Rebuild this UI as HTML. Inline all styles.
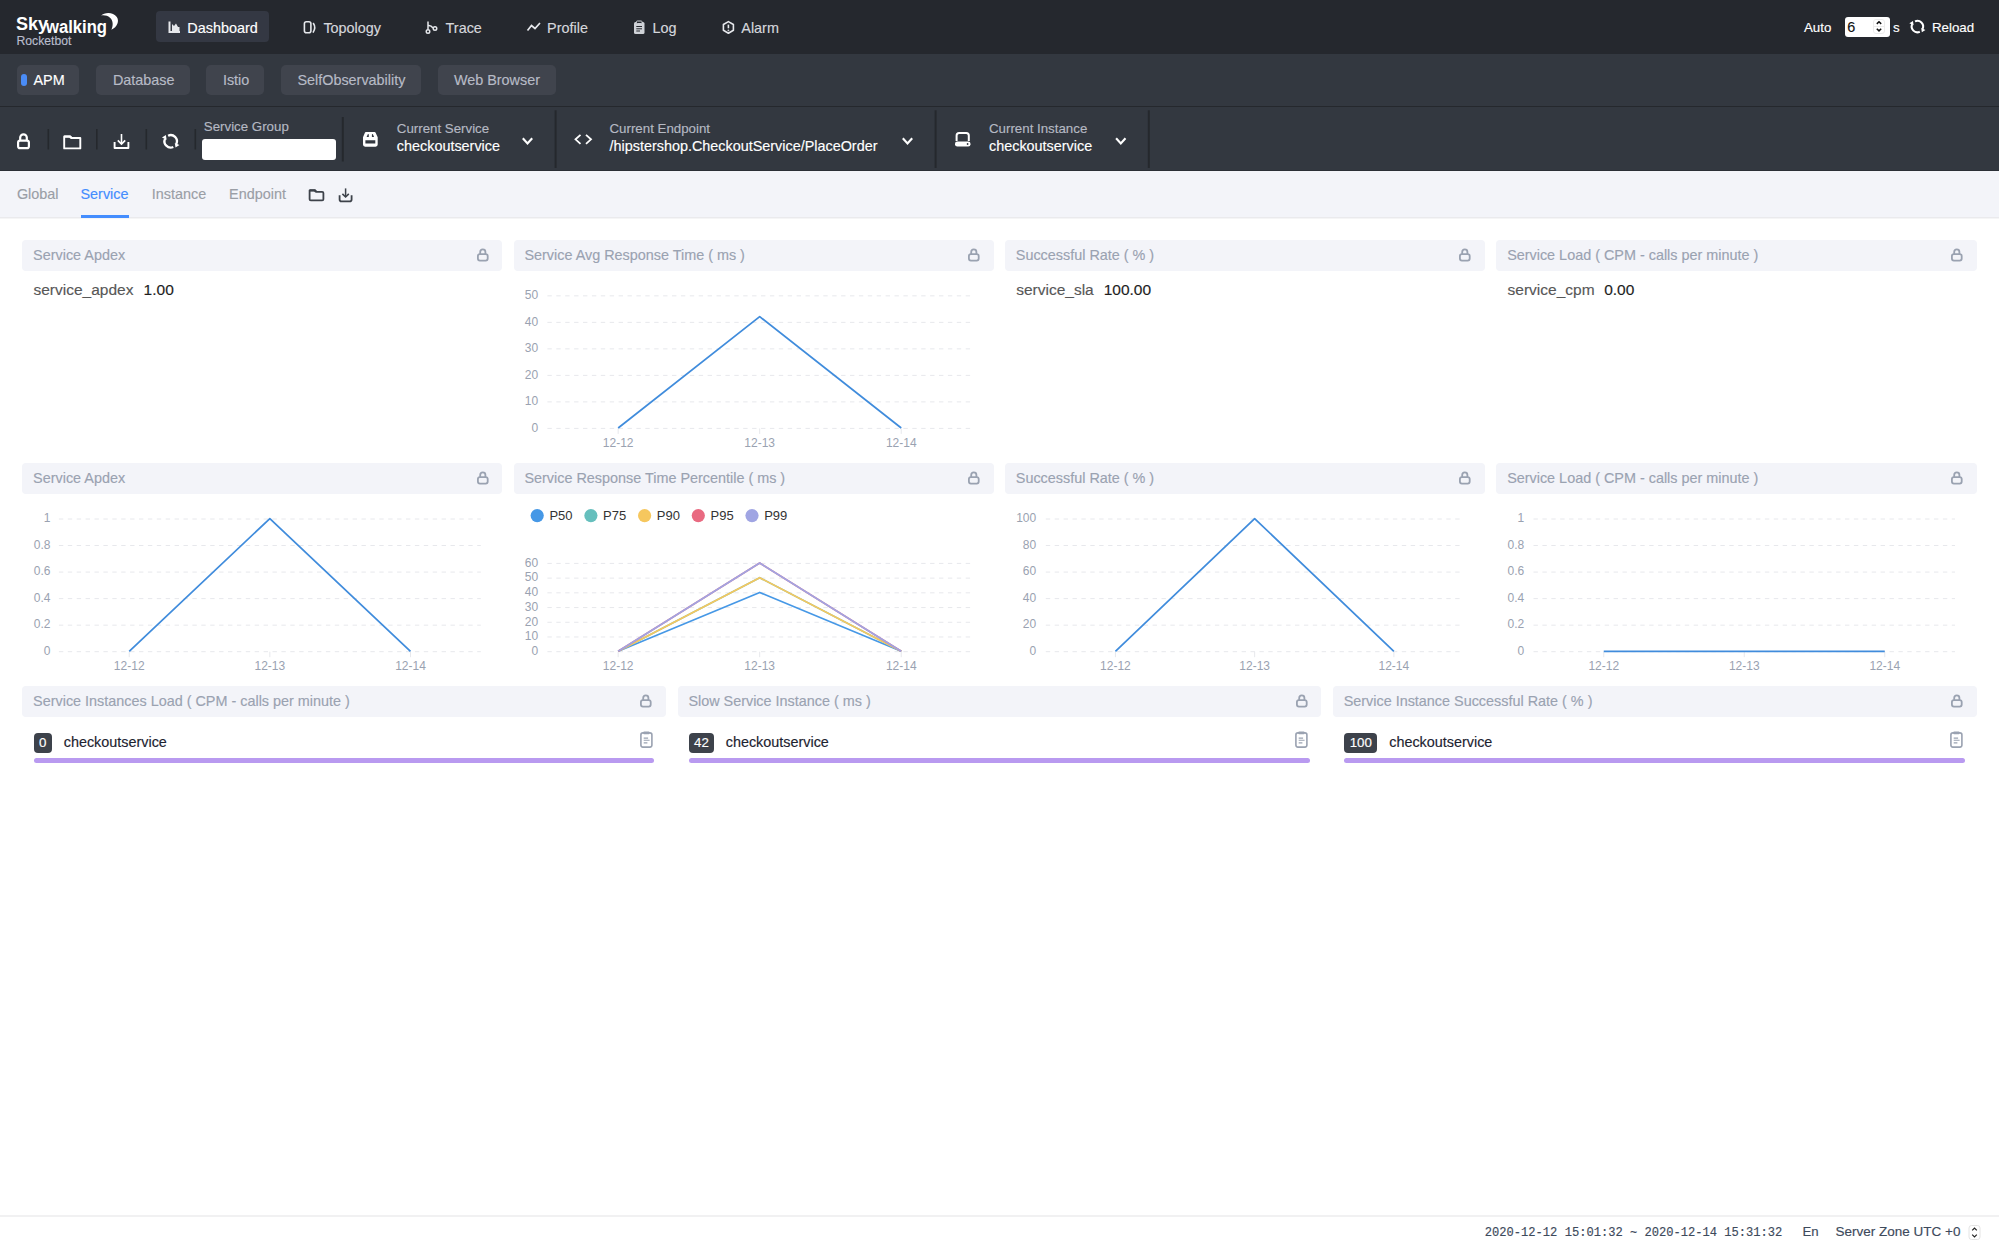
<!DOCTYPE html>
<html><head><meta charset="utf-8">
<style>
html,body{margin:0;padding:0;width:1999px;height:1249px;overflow:hidden;background:#fff;font-family:"Liberation Sans",sans-serif;}
.a{position:absolute;}
.t{position:absolute;white-space:nowrap;line-height:1;-webkit-text-stroke:0.15px currentColor;}
#hdr{left:0;top:0;width:1999px;height:54px;background:#25282e;}
#grp{left:0;top:54px;width:1999px;height:52px;background:#333840;}
#bline{left:0;top:106px;width:1999px;height:1px;background:#25282d;}
#tool{left:0;top:107px;width:1999px;height:64px;background:#333840;}
#tabs{left:0;top:171px;width:1999px;height:46px;background:#f3f4f9;border-bottom:1px solid #eaeaed;box-shadow:0 1px 0 #f5f5f6;}
#foot{left:0;top:1215px;width:1999px;height:2px;background:#f1f1f2;}
.navbtn{background:#343843;border-radius:4px;}
.gbtn{background:#40444d;border-radius:5px;height:29.5px;top:65px;}
.sep{background:#25282d;width:2px;}
.ch{background:#f3f4f9;border-radius:4px;height:31px;}
.cht{font-size:14.4px;color:#9aa2b1;}
</style></head><body>
<!-- header -->
<div id="hdr" class="a"></div>
<div id="grp" class="a"></div>
<div id="bline" class="a"></div>
<div id="tool" class="a"></div>
<div id="tabs" class="a"></div>
<div class="a" style="left:0;top:170px;width:1999px;height:1px;background:#2b2f36"></div>
<div id="foot" class="a"></div>

<!-- logo -->
<svg class="a" style="left:0;top:0" width="140" height="54" viewBox="0 0 140 54">
  <text x="16" y="30.2" font-family="Liberation Sans" font-weight="bold" font-size="18" fill="#fff">Sky</text>
  <text x="46" y="32.9" font-family="Liberation Sans" font-weight="bold" font-size="17.5" fill="#fff" textLength="61" lengthAdjust="spacingAndGlyphs">walking</text>
  <path d="M101.2 15.5 C104 12.5 113 11.5 116.8 17 C119.5 21 117.5 27 111.4 29.8 C113.5 25 113 20.5 110 17.8 C107.5 15.7 104.5 15 101.2 15.5 Z" fill="#fff"/>
</svg>
<div class="t" style="left:16.5px;top:34.9px;font-size:12.2px;color:#b9bdcc">Rocketbot</div>

<!-- nav -->
<div class="a navbtn" style="left:156px;top:11px;width:113px;height:31px"></div>
<svg class="a" style="left:0;top:0" width="800" height="54" viewBox="0 0 800 54" fill="none" stroke="#e6e8ec">
  <!-- dashboard icon -->
  <path d="M169.5 21.5 V32 H180" stroke-width="2"/>
  <path d="M172 31 V24 L174 26 L176 23.5 L178 27 L179.5 27 V31 Z" fill="#e6e8ec" stroke="none"/>
  <!-- topology -->
  <rect x="304.4" y="21.8" width="6.5" height="11" rx="2" stroke-width="1.6"/>
  <path d="M313.2 23 Q316.3 27.5 313 32.6" stroke-width="1.6"/>
  <!-- trace -->
  <circle cx="428" cy="31.5" r="1.8" stroke-width="1.4"/>
  <path d="M428 21.5 V29.6 M428 25.5 Q431 25 433 28" stroke-width="1.5"/>
  <circle cx="435" cy="28.5" r="1.8" stroke-width="1.4"/>
  <!-- profile -->
  <path d="M527.5 30.5 L531.5 25.5 L535 28.5 L540 23" stroke-width="1.7"/>
  <!-- log -->
  <rect x="634" y="22" width="10.5" height="12" rx="1.5" fill="#cfd2d7" stroke="none"/>
  <rect x="636.5" y="21" width="5.5" height="2.5" rx="0.8" fill="#25282e" stroke="#cfd2d7" stroke-width="1"/>
  <path d="M636.3 26.5 H642 M636.3 28.8 H642 M636.3 31 H640" stroke="#25282e" stroke-width="1"/>
  <!-- alarm -->
  <path d="M728.4 21.6 L733.4 24.5 V30.3 L728.4 33.2 L723.4 30.3 V24.5 Z" stroke-width="1.6" stroke-linejoin="round"/>
  <path d="M728.4 24.6 V28.3" stroke-width="1.6"/>
  <circle cx="728.4" cy="30.4" r="0.9" fill="#cfd2d7" stroke="none"/>
</svg>
<div class="t" style="left:187.3px;top:20.7px;font-size:14.4px;color:#fff">Dashboard</div>
<div class="t" style="left:323.4px;top:20.7px;font-size:14.4px;color:#d5d7dc">Topology</div>
<div class="t" style="left:445.6px;top:20.7px;font-size:14.4px;color:#d5d7dc">Trace</div>
<div class="t" style="left:547.1px;top:20.7px;font-size:14.4px;color:#d5d7dc">Profile</div>
<div class="t" style="left:652.6px;top:20.7px;font-size:14.4px;color:#d5d7dc">Log</div>
<div class="t" style="left:741.3px;top:20.7px;font-size:14.4px;color:#d5d7dc">Alarm</div>

<!-- right header -->
<div class="t" style="left:1804px;top:20.6px;font-size:13.3px;color:#fff">Auto</div>
<div class="a" style="left:1845px;top:17px;width:44.5px;height:19.5px;background:#fff;border-radius:3px"></div>
<div class="t" style="left:1847.2px;top:19.6px;font-size:14.4px;color:#111">6</div>
<svg class="a" style="left:1873px;top:19px" width="12" height="15" viewBox="0 0 12 15" fill="none" stroke="#111" stroke-width="1.5">
  <rect x="0.5" y="0.5" width="11" height="14" rx="2.5" stroke="#ececec" stroke-width="1"/><path d="M0.5 7.5 H11.5" stroke="#ececec" stroke-width="1"/>
  <path d="M3.8 4.9 L6 2.8 L8.2 4.9 M3.8 9.8 L6 11.9 L8.2 9.8"/>
</svg>
<div class="t" style="left:1893px;top:20.6px;font-size:13.3px;color:#fff">s</div>
<svg class="a" style="left:0;top:0" width="1999" height="54" viewBox="0 0 1999 54" fill="none" stroke="#fff"><g transform="translate(1917.4 26.6) scale(0.92) translate(-170.7 -141.3)">
  <path d="M168.08 135.68 A6.2 6.2 0 0 1 176.32 143.92" stroke-width="2.2"/><path d="M179.44 145.04 L174.80 142.88 L175.52 147.52 Z" fill="#fff" stroke="none"/>
  <path d="M173.32 146.92 A6.2 6.2 0 0 1 165.08 138.68" stroke-width="2.2"/><path d="M161.96 137.56 L166.60 139.72 L165.88 135.08 Z" fill="#fff" stroke="none"/></g></svg>
<div class="t" style="left:1932px;top:20.6px;font-size:13.3px;color:#fff">Reload</div>

<!-- group buttons -->
<div class="a gbtn" style="left:17px;width:62px"></div>
<div class="a" style="left:21px;top:74px;width:6px;height:12px;background:#4a8cf7;border-radius:3px"></div>
<div class="t" style="left:33.5px;top:72.8px;font-size:14.4px;color:#fff">APM</div>
<div class="a gbtn" style="left:96px;width:93.5px"></div>
<div class="t" style="left:112.9px;top:72.8px;font-size:14.4px;color:#b7bbc6">Database</div>
<div class="a gbtn" style="left:206px;width:57.5px"></div>
<div class="t" style="left:222.9px;top:72.8px;font-size:14.4px;color:#b7bbc6">Istio</div>
<div class="a gbtn" style="left:281px;width:139.5px"></div>
<div class="t" style="left:297.4px;top:72.8px;font-size:14.4px;color:#b7bbc6">SelfObservability</div>
<div class="a gbtn" style="left:437.5px;width:118px"></div>
<div class="t" style="left:453.9px;top:72.8px;font-size:14.4px;color:#b7bbc6">Web Browser</div>


<!-- toolbar -->
<svg class="a" style="left:0;top:107px" width="1200" height="64" viewBox="0 107 1200 64" fill="none" stroke="#fff">
  <!-- lock -->
  <path d="M20.2 140.5 V137.6 A3.3 3.3 0 0 1 26.8 137.6 V140.5" stroke-width="2.2"/>
  <rect x="18.1" y="140.6" width="10.8" height="7.6" rx="2" stroke-width="2.2"/>
  <!-- separators -->
  <rect x="47.5" y="129" width="1.6" height="20.5" fill="#25282d" stroke="none"/>
  <rect x="96" y="129" width="1.6" height="20.5" fill="#25282d" stroke="none"/>
  <rect x="145.5" y="129" width="1.6" height="20.5" fill="#25282d" stroke="none"/>
  <rect x="194.5" y="129" width="1.6" height="20.5" fill="#25282d" stroke="none"/>
  <rect x="341.8" y="117" width="2" height="44.5" fill="#25282d" stroke="none"/>
  <rect x="554.6" y="110.3" width="2" height="57.7" fill="#25282d" stroke="none"/>
  <rect x="934.6" y="110.3" width="2" height="57.7" fill="#25282d" stroke="none"/>
  <rect x="1147.8" y="110.3" width="2" height="57.7" fill="#25282d" stroke="none"/>
  <!-- folder -->
  <path d="M64.2 148.4 V136.4 H70 L71.5 138 H80.3 V148.4 Z" stroke-width="1.9" stroke-linejoin="round"/>
  <path d="M64.2 136.6 H70 L71.3 137.9" stroke-width="2.4"/>
  <!-- download -->
  <path d="M121.5 134 V144" stroke-width="1.6"/>
  <path d="M117.8 140.3 L121.5 144 L125.2 140.3" stroke-width="1.7"/>
  <path d="M114.6 142 V148 H128.4 V142" stroke-width="1.9" stroke-linejoin="round"/>
  <!-- refresh -->
  <path d="M168.08 135.68 A6.2 6.2 0 0 1 176.32 143.92" stroke-width="2.3"/><path d="M179.44 145.04 L174.80 142.88 L175.52 147.52 Z" fill="#fff" stroke="none"/>
  <path d="M173.32 146.92 A6.2 6.2 0 0 1 165.08 138.68" stroke-width="2.3"/><path d="M161.96 137.56 L166.60 139.72 L165.88 135.08 Z" fill="#fff" stroke="none"/>
  <!-- service icon -->
  <path fill="#fff" stroke="none" fill-rule="evenodd" d="M365.8 132 H374.6 Q375.2 132 375.5 132.6 L377.7 137.3 V144.6 Q377.7 146.7 375.6 146.7 H365.1 Q363 146.7 363 144.6 V137.3 L365 132.6 Q365.3 132 365.8 132 Z M365.4 140.2 H375.3 V143.6 H365.4 Z M366.6 137 L367.8 134.3 Q368.4 133.9 368.8 134.4 L368.8 137 Z M371.9 137 L371.9 134.4 Q372.3 133.9 372.9 134.3 L374.1 137 Z"/>
  <!-- chevrons -->
  <path d="M522.8 138.2 L527.5 143.5 L532.2 138.2" stroke-width="2.1"/>
  <path d="M902.8 138.2 L907.5 143.5 L912.2 138.2" stroke-width="2.1"/>
  <path d="M1116.1 138.2 L1120.8 143.5 L1125.5 138.2" stroke-width="2.1"/>
  <!-- endpoint icon -->
  <path d="M580.5 134.8 L575.5 139.3 L580.5 143.8 M586 134.8 L591 139.3 L586 143.8" stroke-width="1.8"/>
  <!-- instance icon -->
  <path d="M956.6 141 V135.5 A2.5 2.5 0 0 1 959.1 133 H966.3 A2.5 2.5 0 0 1 968.8 135.5 V141" stroke-width="2"/>
  <rect x="955" y="141.5" width="15.5" height="5" rx="2.3" fill="#fff" stroke="none"/>
  <circle cx="967.6" cy="144" r="0.9" fill="#333840" stroke="none"/>
</svg>
<div class="a" style="left:201.7px;top:138.8px;width:134.2px;height:21.3px;background:#fff;border-radius:3px"></div>
<div class="t" style="left:203.8px;top:119.9px;font-size:13.3px;color:#b5b9c3">Service Group</div>
<div class="t" style="left:396.8px;top:122.0px;font-size:13.3px;color:#b5b9c3">Current Service</div>
<div class="t" style="left:396.8px;top:139.0px;font-size:14.4px;color:#fff">checkoutservice</div>
<div class="t" style="left:609.5px;top:122.0px;font-size:13.3px;color:#b5b9c3">Current Endpoint</div>
<div class="t" style="left:609.5px;top:139.0px;font-size:14.4px;color:#fff">/hipstershop.CheckoutService/PlaceOrder</div>
<div class="t" style="left:989px;top:122.0px;font-size:13.3px;color:#b5b9c3">Current Instance</div>
<div class="t" style="left:989px;top:139.0px;font-size:14.4px;color:#fff">checkoutservice</div>

<!-- tabs -->
<div class="t" style="left:16.9px;top:187.1px;font-size:14.4px;color:#9a9ea6">Global</div>
<div class="t" style="left:80.5px;top:187.1px;font-size:14.4px;color:#448dfe">Service</div>
<div class="a" style="left:80.9px;top:214.5px;width:48.5px;height:3px;background:#448dfe"></div>
<div class="t" style="left:151.8px;top:187.1px;font-size:14.4px;color:#9a9ea6">Instance</div>
<div class="t" style="left:229.1px;top:187.1px;font-size:14.4px;color:#9a9ea6">Endpoint</div>
<svg class="a" style="left:300px;top:180px" width="60" height="30" viewBox="300 180 60 30" fill="none" stroke="#3d424a">
  <path d="M309.6 199.2 V190.3 H314.8 L316.2 191.8 H322.2 Q323.4 191.8 323.4 193 V199.2 Q323.4 200.4 322.2 200.4 H310.8 Q309.6 200.4 309.6 199.2 Z" stroke-width="1.8" stroke-linejoin="round"/>
  <path d="M309.6 190.4 H314.8 L316 191.6" stroke-width="2.3"/>
  <path d="M345.6 188.4 V197" stroke-width="1.5"/>
  <path d="M342.4 193.9 L345.6 197 L348.8 193.9" stroke-width="1.6"/>
  <path d="M339.6 195.2 V199.4 Q339.6 201.3 341.5 201.3 H349.7 Q351.6 201.3 351.6 199.4 V195.2" stroke-width="1.8"/>
</svg>

<div class="a ch" style="left:22.20px;top:240px;width:480.25px"></div>
<div class="t" style="left:33.10px;top:247.91px;font-size:14.4px;color:#9aa2b1;">Service Apdex</div>
<svg class="a" style="left:476.55px;top:248.20px" width="13" height="15" viewBox="0 0 13 15" fill="none" stroke="#9aa2b1" stroke-width="1.8"><path d="M3.2 6.2 V4.0 A2.6 2.6 0 0 1 8.4 4.0 V6.2"/><rect x="0.9" y="6.1" width="9.8" height="6.5" rx="2"/></svg>
<div class="a ch" style="left:513.55px;top:240px;width:480.25px"></div>
<div class="t" style="left:524.45px;top:247.91px;font-size:14.4px;color:#9aa2b1;">Service Avg Response Time ( ms )</div>
<svg class="a" style="left:967.90px;top:248.20px" width="13" height="15" viewBox="0 0 13 15" fill="none" stroke="#9aa2b1" stroke-width="1.8"><path d="M3.2 6.2 V4.0 A2.6 2.6 0 0 1 8.4 4.0 V6.2"/><rect x="0.9" y="6.1" width="9.8" height="6.5" rx="2"/></svg>
<div class="a ch" style="left:1004.90px;top:240px;width:480.25px"></div>
<div class="t" style="left:1015.80px;top:247.91px;font-size:14.4px;color:#9aa2b1;">Successful Rate ( % )</div>
<svg class="a" style="left:1459.25px;top:248.20px" width="13" height="15" viewBox="0 0 13 15" fill="none" stroke="#9aa2b1" stroke-width="1.8"><path d="M3.2 6.2 V4.0 A2.6 2.6 0 0 1 8.4 4.0 V6.2"/><rect x="0.9" y="6.1" width="9.8" height="6.5" rx="2"/></svg>
<div class="a ch" style="left:1496.25px;top:240px;width:480.25px"></div>
<div class="t" style="left:1507.15px;top:247.91px;font-size:14.4px;color:#9aa2b1;">Service Load ( CPM - calls per minute )</div>
<svg class="a" style="left:1950.60px;top:248.20px" width="13" height="15" viewBox="0 0 13 15" fill="none" stroke="#9aa2b1" stroke-width="1.8"><path d="M3.2 6.2 V4.0 A2.6 2.6 0 0 1 8.4 4.0 V6.2"/><rect x="0.9" y="6.1" width="9.8" height="6.5" rx="2"/></svg>
<div class="a ch" style="left:22.20px;top:463px;width:480.25px"></div>
<div class="t" style="left:33.10px;top:470.91px;font-size:14.4px;color:#9aa2b1;">Service Apdex</div>
<svg class="a" style="left:476.55px;top:471.20px" width="13" height="15" viewBox="0 0 13 15" fill="none" stroke="#9aa2b1" stroke-width="1.8"><path d="M3.2 6.2 V4.0 A2.6 2.6 0 0 1 8.4 4.0 V6.2"/><rect x="0.9" y="6.1" width="9.8" height="6.5" rx="2"/></svg>
<div class="a ch" style="left:513.55px;top:463px;width:480.25px"></div>
<div class="t" style="left:524.45px;top:470.91px;font-size:14.4px;color:#9aa2b1;">Service Response Time Percentile ( ms )</div>
<svg class="a" style="left:967.90px;top:471.20px" width="13" height="15" viewBox="0 0 13 15" fill="none" stroke="#9aa2b1" stroke-width="1.8"><path d="M3.2 6.2 V4.0 A2.6 2.6 0 0 1 8.4 4.0 V6.2"/><rect x="0.9" y="6.1" width="9.8" height="6.5" rx="2"/></svg>
<div class="a ch" style="left:1004.90px;top:463px;width:480.25px"></div>
<div class="t" style="left:1015.80px;top:470.91px;font-size:14.4px;color:#9aa2b1;">Successful Rate ( % )</div>
<svg class="a" style="left:1459.25px;top:471.20px" width="13" height="15" viewBox="0 0 13 15" fill="none" stroke="#9aa2b1" stroke-width="1.8"><path d="M3.2 6.2 V4.0 A2.6 2.6 0 0 1 8.4 4.0 V6.2"/><rect x="0.9" y="6.1" width="9.8" height="6.5" rx="2"/></svg>
<div class="a ch" style="left:1496.25px;top:463px;width:480.25px"></div>
<div class="t" style="left:1507.15px;top:470.91px;font-size:14.4px;color:#9aa2b1;">Service Load ( CPM - calls per minute )</div>
<svg class="a" style="left:1950.60px;top:471.20px" width="13" height="15" viewBox="0 0 13 15" fill="none" stroke="#9aa2b1" stroke-width="1.8"><path d="M3.2 6.2 V4.0 A2.6 2.6 0 0 1 8.4 4.0 V6.2"/><rect x="0.9" y="6.1" width="9.8" height="6.5" rx="2"/></svg>
<div class="a ch" style="left:22.20px;top:686px;width:643.90px"></div>
<div class="t" style="left:33.10px;top:693.91px;font-size:14.4px;color:#9aa2b1;">Service Instances Load ( CPM - calls per minute )</div>
<svg class="a" style="left:640.20px;top:694.20px" width="13" height="15" viewBox="0 0 13 15" fill="none" stroke="#9aa2b1" stroke-width="1.8"><path d="M3.2 6.2 V4.0 A2.6 2.6 0 0 1 8.4 4.0 V6.2"/><rect x="0.9" y="6.1" width="9.8" height="6.5" rx="2"/></svg>
<div class="a ch" style="left:677.50px;top:686px;width:643.90px"></div>
<div class="t" style="left:688.40px;top:693.91px;font-size:14.4px;color:#9aa2b1;">Slow Service Instance ( ms )</div>
<svg class="a" style="left:1295.50px;top:694.20px" width="13" height="15" viewBox="0 0 13 15" fill="none" stroke="#9aa2b1" stroke-width="1.8"><path d="M3.2 6.2 V4.0 A2.6 2.6 0 0 1 8.4 4.0 V6.2"/><rect x="0.9" y="6.1" width="9.8" height="6.5" rx="2"/></svg>
<div class="a ch" style="left:1332.80px;top:686px;width:643.90px"></div>
<div class="t" style="left:1343.70px;top:693.91px;font-size:14.4px;color:#9aa2b1;">Service Instance Successful Rate ( % )</div>
<svg class="a" style="left:1950.80px;top:694.20px" width="13" height="15" viewBox="0 0 13 15" fill="none" stroke="#9aa2b1" stroke-width="1.8"><path d="M3.2 6.2 V4.0 A2.6 2.6 0 0 1 8.4 4.0 V6.2"/><rect x="0.9" y="6.1" width="9.8" height="6.5" rx="2"/></svg>
<div class="t" style="left:33.50px;top:282.38px;font-size:15.5px;color:#575757;">service_apdex</div>
<div class="t" style="left:143.60px;top:282.38px;font-size:15.5px;color:#1e1e1e;">1.00</div>
<div class="t" style="left:1016.20px;top:282.38px;font-size:15.5px;color:#575757;">service_sla</div>
<div class="t" style="left:1103.70px;top:282.38px;font-size:15.5px;color:#1e1e1e;">100.00</div>
<div class="t" style="left:1507.55px;top:282.38px;font-size:15.5px;color:#575757;">service_cpm</div>
<div class="t" style="left:1604.20px;top:282.38px;font-size:15.5px;color:#1e1e1e;">0.00</div>
<svg class="a" style="left:0;top:0" width="1999" height="1249" viewBox="0 0 1999 1249" font-family="Liberation Sans"><line x1="547.40" y1="295.85" x2="972.00" y2="295.85" stroke="#e7e8ec" stroke-width="1" stroke-dasharray="4.4 4.5"/><text x="538.20" y="299.15" text-anchor="end" font-size="12" fill="#9aa2b1">50</text><line x1="547.40" y1="322.36" x2="972.00" y2="322.36" stroke="#e7e8ec" stroke-width="1" stroke-dasharray="4.4 4.5"/><text x="538.20" y="325.66" text-anchor="end" font-size="12" fill="#9aa2b1">40</text><line x1="547.40" y1="348.87" x2="972.00" y2="348.87" stroke="#e7e8ec" stroke-width="1" stroke-dasharray="4.4 4.5"/><text x="538.20" y="352.17" text-anchor="end" font-size="12" fill="#9aa2b1">30</text><line x1="547.40" y1="375.38" x2="972.00" y2="375.38" stroke="#e7e8ec" stroke-width="1" stroke-dasharray="4.4 4.5"/><text x="538.20" y="378.68" text-anchor="end" font-size="12" fill="#9aa2b1">20</text><line x1="547.40" y1="401.89" x2="972.00" y2="401.89" stroke="#e7e8ec" stroke-width="1" stroke-dasharray="4.4 4.5"/><text x="538.20" y="405.19" text-anchor="end" font-size="12" fill="#9aa2b1">10</text><line x1="547.40" y1="428.40" x2="972.00" y2="428.40" stroke="#e7e8ec" stroke-width="1" stroke-dasharray="4.4 4.5"/><text x="538.20" y="431.70" text-anchor="end" font-size="12" fill="#9aa2b1">0</text><line x1="618.17" y1="428.40" x2="618.17" y2="433.90" stroke="#e7e8ec" stroke-width="1"/><text x="618.17" y="446.80" text-anchor="middle" font-size="12" fill="#9aa2b1">12-12</text><line x1="759.70" y1="428.40" x2="759.70" y2="433.90" stroke="#e7e8ec" stroke-width="1"/><text x="759.70" y="446.80" text-anchor="middle" font-size="12" fill="#9aa2b1">12-13</text><line x1="901.23" y1="428.40" x2="901.23" y2="433.90" stroke="#e7e8ec" stroke-width="1"/><text x="901.23" y="446.80" text-anchor="middle" font-size="12" fill="#9aa2b1">12-14</text><polyline points="618.17,428.00 759.70,316.66 901.23,428.00" fill="none" stroke="#408cdc" stroke-width="1.75" stroke-linejoin="round"/><line x1="58.90" y1="519.00" x2="480.80" y2="519.00" stroke="#e7e8ec" stroke-width="1" stroke-dasharray="4.4 4.5"/><text x="50.40" y="522.30" text-anchor="end" font-size="12" fill="#9aa2b1">1</text><line x1="58.90" y1="545.54" x2="480.80" y2="545.54" stroke="#e7e8ec" stroke-width="1" stroke-dasharray="4.4 4.5"/><text x="50.40" y="548.84" text-anchor="end" font-size="12" fill="#9aa2b1">0.8</text><line x1="58.90" y1="572.08" x2="480.80" y2="572.08" stroke="#e7e8ec" stroke-width="1" stroke-dasharray="4.4 4.5"/><text x="50.40" y="575.38" text-anchor="end" font-size="12" fill="#9aa2b1">0.6</text><line x1="58.90" y1="598.62" x2="480.80" y2="598.62" stroke="#e7e8ec" stroke-width="1" stroke-dasharray="4.4 4.5"/><text x="50.40" y="601.92" text-anchor="end" font-size="12" fill="#9aa2b1">0.4</text><line x1="58.90" y1="625.16" x2="480.80" y2="625.16" stroke="#e7e8ec" stroke-width="1" stroke-dasharray="4.4 4.5"/><text x="50.40" y="628.46" text-anchor="end" font-size="12" fill="#9aa2b1">0.2</text><line x1="58.90" y1="651.70" x2="480.80" y2="651.70" stroke="#e7e8ec" stroke-width="1" stroke-dasharray="4.4 4.5"/><text x="50.40" y="655.00" text-anchor="end" font-size="12" fill="#9aa2b1">0</text><line x1="129.22" y1="651.70" x2="129.22" y2="657.20" stroke="#e7e8ec" stroke-width="1"/><text x="129.22" y="670.10" text-anchor="middle" font-size="12" fill="#9aa2b1">12-12</text><line x1="269.85" y1="651.70" x2="269.85" y2="657.20" stroke="#e7e8ec" stroke-width="1"/><text x="269.85" y="670.10" text-anchor="middle" font-size="12" fill="#9aa2b1">12-13</text><line x1="410.48" y1="651.70" x2="410.48" y2="657.20" stroke="#e7e8ec" stroke-width="1"/><text x="410.48" y="670.10" text-anchor="middle" font-size="12" fill="#9aa2b1">12-14</text><polyline points="129.22,651.30 269.85,518.60 410.48,651.30" fill="none" stroke="#408cdc" stroke-width="1.75" stroke-linejoin="round"/><line x1="547.40" y1="563.40" x2="972.00" y2="563.40" stroke="#e7e8ec" stroke-width="1" stroke-dasharray="4.4 4.5"/><text x="538.20" y="566.70" text-anchor="end" font-size="12" fill="#9aa2b1">60</text><line x1="547.40" y1="578.12" x2="972.00" y2="578.12" stroke="#e7e8ec" stroke-width="1" stroke-dasharray="4.4 4.5"/><text x="538.20" y="581.42" text-anchor="end" font-size="12" fill="#9aa2b1">50</text><line x1="547.40" y1="592.83" x2="972.00" y2="592.83" stroke="#e7e8ec" stroke-width="1" stroke-dasharray="4.4 4.5"/><text x="538.20" y="596.13" text-anchor="end" font-size="12" fill="#9aa2b1">40</text><line x1="547.40" y1="607.55" x2="972.00" y2="607.55" stroke="#e7e8ec" stroke-width="1" stroke-dasharray="4.4 4.5"/><text x="538.20" y="610.85" text-anchor="end" font-size="12" fill="#9aa2b1">30</text><line x1="547.40" y1="622.27" x2="972.00" y2="622.27" stroke="#e7e8ec" stroke-width="1" stroke-dasharray="4.4 4.5"/><text x="538.20" y="625.57" text-anchor="end" font-size="12" fill="#9aa2b1">20</text><line x1="547.40" y1="636.98" x2="972.00" y2="636.98" stroke="#e7e8ec" stroke-width="1" stroke-dasharray="4.4 4.5"/><text x="538.20" y="640.28" text-anchor="end" font-size="12" fill="#9aa2b1">10</text><line x1="547.40" y1="651.70" x2="972.00" y2="651.70" stroke="#e7e8ec" stroke-width="1" stroke-dasharray="4.4 4.5"/><text x="538.20" y="655.00" text-anchor="end" font-size="12" fill="#9aa2b1">0</text><line x1="618.17" y1="651.70" x2="618.17" y2="657.20" stroke="#e7e8ec" stroke-width="1"/><text x="618.17" y="670.10" text-anchor="middle" font-size="12" fill="#9aa2b1">12-12</text><line x1="759.70" y1="651.70" x2="759.70" y2="657.20" stroke="#e7e8ec" stroke-width="1"/><text x="759.70" y="670.10" text-anchor="middle" font-size="12" fill="#9aa2b1">12-13</text><line x1="901.23" y1="651.70" x2="901.23" y2="657.20" stroke="#e7e8ec" stroke-width="1"/><text x="901.23" y="670.10" text-anchor="middle" font-size="12" fill="#9aa2b1">12-14</text><polyline points="618.17,651.30 759.70,592.43 901.23,651.30" fill="none" stroke="#4698e6" stroke-width="1.7" stroke-linejoin="round"/><polyline points="618.17,651.30 759.70,577.72 901.23,651.30" fill="none" stroke="#66bfbd" stroke-width="1.7" stroke-linejoin="round"/><polyline points="618.17,651.30 759.70,577.72 901.23,651.30" fill="none" stroke="#f6c75e" stroke-width="1.7" stroke-linejoin="round"/><polyline points="618.17,651.30 759.70,563.00 901.23,651.30" fill="none" stroke="#e96a81" stroke-width="1.7" stroke-linejoin="round"/><polyline points="618.17,651.30 759.70,563.00 901.23,651.30" fill="none" stroke="#a0a5e3" stroke-width="1.7" stroke-linejoin="round"/><line x1="1045.80" y1="519.00" x2="1463.50" y2="519.00" stroke="#e7e8ec" stroke-width="1" stroke-dasharray="4.4 4.5"/><text x="1036.20" y="522.30" text-anchor="end" font-size="12" fill="#9aa2b1">100</text><line x1="1045.80" y1="545.54" x2="1463.50" y2="545.54" stroke="#e7e8ec" stroke-width="1" stroke-dasharray="4.4 4.5"/><text x="1036.20" y="548.84" text-anchor="end" font-size="12" fill="#9aa2b1">80</text><line x1="1045.80" y1="572.08" x2="1463.50" y2="572.08" stroke="#e7e8ec" stroke-width="1" stroke-dasharray="4.4 4.5"/><text x="1036.20" y="575.38" text-anchor="end" font-size="12" fill="#9aa2b1">60</text><line x1="1045.80" y1="598.62" x2="1463.50" y2="598.62" stroke="#e7e8ec" stroke-width="1" stroke-dasharray="4.4 4.5"/><text x="1036.20" y="601.92" text-anchor="end" font-size="12" fill="#9aa2b1">40</text><line x1="1045.80" y1="625.16" x2="1463.50" y2="625.16" stroke="#e7e8ec" stroke-width="1" stroke-dasharray="4.4 4.5"/><text x="1036.20" y="628.46" text-anchor="end" font-size="12" fill="#9aa2b1">20</text><line x1="1045.80" y1="651.70" x2="1463.50" y2="651.70" stroke="#e7e8ec" stroke-width="1" stroke-dasharray="4.4 4.5"/><text x="1036.20" y="655.00" text-anchor="end" font-size="12" fill="#9aa2b1">0</text><line x1="1115.42" y1="651.70" x2="1115.42" y2="657.20" stroke="#e7e8ec" stroke-width="1"/><text x="1115.42" y="670.10" text-anchor="middle" font-size="12" fill="#9aa2b1">12-12</text><line x1="1254.65" y1="651.70" x2="1254.65" y2="657.20" stroke="#e7e8ec" stroke-width="1"/><text x="1254.65" y="670.10" text-anchor="middle" font-size="12" fill="#9aa2b1">12-13</text><line x1="1393.88" y1="651.70" x2="1393.88" y2="657.20" stroke="#e7e8ec" stroke-width="1"/><text x="1393.88" y="670.10" text-anchor="middle" font-size="12" fill="#9aa2b1">12-14</text><polyline points="1115.42,651.30 1254.65,518.60 1393.88,651.30" fill="none" stroke="#408cdc" stroke-width="1.75" stroke-linejoin="round"/><line x1="1533.50" y1="519.00" x2="1955.00" y2="519.00" stroke="#e7e8ec" stroke-width="1" stroke-dasharray="4.4 4.5"/><text x="1524.30" y="522.30" text-anchor="end" font-size="12" fill="#9aa2b1">1</text><line x1="1533.50" y1="545.54" x2="1955.00" y2="545.54" stroke="#e7e8ec" stroke-width="1" stroke-dasharray="4.4 4.5"/><text x="1524.30" y="548.84" text-anchor="end" font-size="12" fill="#9aa2b1">0.8</text><line x1="1533.50" y1="572.08" x2="1955.00" y2="572.08" stroke="#e7e8ec" stroke-width="1" stroke-dasharray="4.4 4.5"/><text x="1524.30" y="575.38" text-anchor="end" font-size="12" fill="#9aa2b1">0.6</text><line x1="1533.50" y1="598.62" x2="1955.00" y2="598.62" stroke="#e7e8ec" stroke-width="1" stroke-dasharray="4.4 4.5"/><text x="1524.30" y="601.92" text-anchor="end" font-size="12" fill="#9aa2b1">0.4</text><line x1="1533.50" y1="625.16" x2="1955.00" y2="625.16" stroke="#e7e8ec" stroke-width="1" stroke-dasharray="4.4 4.5"/><text x="1524.30" y="628.46" text-anchor="end" font-size="12" fill="#9aa2b1">0.2</text><line x1="1533.50" y1="651.70" x2="1955.00" y2="651.70" stroke="#e7e8ec" stroke-width="1" stroke-dasharray="4.4 4.5"/><text x="1524.30" y="655.00" text-anchor="end" font-size="12" fill="#9aa2b1">0</text><line x1="1603.75" y1="651.70" x2="1603.75" y2="657.20" stroke="#e7e8ec" stroke-width="1"/><text x="1603.75" y="670.10" text-anchor="middle" font-size="12" fill="#9aa2b1">12-12</text><line x1="1744.25" y1="651.70" x2="1744.25" y2="657.20" stroke="#e7e8ec" stroke-width="1"/><text x="1744.25" y="670.10" text-anchor="middle" font-size="12" fill="#9aa2b1">12-13</text><line x1="1884.75" y1="651.70" x2="1884.75" y2="657.20" stroke="#e7e8ec" stroke-width="1"/><text x="1884.75" y="670.10" text-anchor="middle" font-size="12" fill="#9aa2b1">12-14</text><polyline points="1603.75,651.30 1744.25,651.30 1884.75,651.30" fill="none" stroke="#408cdc" stroke-width="1.75" stroke-linejoin="round"/><circle cx="537.20" cy="515.6" r="6.6" fill="#4698e6"/><text x="549.40" y="520.3" font-size="13" fill="#333">P50</text><circle cx="590.90" cy="515.6" r="6.6" fill="#66bfbd"/><text x="603.10" y="520.3" font-size="13" fill="#333">P75</text><circle cx="644.60" cy="515.6" r="6.6" fill="#f6c75e"/><text x="656.80" y="520.3" font-size="13" fill="#333">P90</text><circle cx="698.30" cy="515.6" r="6.6" fill="#e96a81"/><text x="710.50" y="520.3" font-size="13" fill="#333">P95</text><circle cx="752.00" cy="515.6" r="6.6" fill="#a0a5e3"/><text x="764.20" y="520.3" font-size="13" fill="#333">P99</text></svg>
<div class="a" style="left:33.60px;top:732.8px;width:18.3px;height:20.1px;background:#3d424b;border-radius:4px"></div>
<div class="t" style="left:33.60px;width:18.3px;text-align:center;top:736.44px;font-size:13.3px;color:#fff">0</div>
<div class="t" style="left:63.70px;top:734.71px;font-size:14.4px;color:#1d2330;">checkoutservice</div>
<svg class="a" style="left:639.50px;top:730.90px" width="13" height="17" viewBox="0 0 13 17" fill="none" stroke="#9aa2b1"><rect x="0.9" y="1.9" width="11" height="14.2" rx="2" stroke-width="1.6"/><rect x="3.2" y="0.4" width="6.4" height="2.8" rx="1" fill="#9aa2b1" stroke="none"/><path d="M3.7 7.1 H8.1 M3.7 9.3 H9.6 M3.7 11.9 H7.4" stroke-width="1.1"/></svg>
<div class="a" style="left:33.60px;top:758.3px;width:620.90px;height:4.6px;background:#b99af0;border-radius:2.5px"></div>
<div class="a" style="left:688.90px;top:732.8px;width:25.0px;height:20.1px;background:#3d424b;border-radius:4px"></div>
<div class="t" style="left:688.90px;width:25.0px;text-align:center;top:736.44px;font-size:13.3px;color:#fff">42</div>
<div class="t" style="left:725.70px;top:734.71px;font-size:14.4px;color:#1d2330;">checkoutservice</div>
<svg class="a" style="left:1294.80px;top:730.90px" width="13" height="17" viewBox="0 0 13 17" fill="none" stroke="#9aa2b1"><rect x="0.9" y="1.9" width="11" height="14.2" rx="2" stroke-width="1.6"/><rect x="3.2" y="0.4" width="6.4" height="2.8" rx="1" fill="#9aa2b1" stroke="none"/><path d="M3.7 7.1 H8.1 M3.7 9.3 H9.6 M3.7 11.9 H7.4" stroke-width="1.1"/></svg>
<div class="a" style="left:688.90px;top:758.3px;width:620.90px;height:4.6px;background:#b99af0;border-radius:2.5px"></div>
<div class="a" style="left:1344.20px;top:732.8px;width:33.2px;height:20.1px;background:#3d424b;border-radius:4px"></div>
<div class="t" style="left:1344.20px;width:33.2px;text-align:center;top:736.44px;font-size:13.3px;color:#fff">100</div>
<div class="t" style="left:1389.20px;top:734.71px;font-size:14.4px;color:#1d2330;">checkoutservice</div>
<svg class="a" style="left:1950.10px;top:730.90px" width="13" height="17" viewBox="0 0 13 17" fill="none" stroke="#9aa2b1"><rect x="0.9" y="1.9" width="11" height="14.2" rx="2" stroke-width="1.6"/><rect x="3.2" y="0.4" width="6.4" height="2.8" rx="1" fill="#9aa2b1" stroke="none"/><path d="M3.7 7.1 H8.1 M3.7 9.3 H9.6 M3.7 11.9 H7.4" stroke-width="1.1"/></svg>
<div class="a" style="left:1344.20px;top:758.3px;width:620.90px;height:4.6px;background:#b99af0;border-radius:2.5px"></div>
<div class="t" style="left:1484.8px;top:1227.43px;font-family:'Liberation Mono',monospace;font-size:12.1px;color:#3d4a5c">2020-12-12 15:01:32 ~ 2020-12-14 15:31:32</div>
<div class="t" style="left:1802.50px;top:1225.33px;font-size:13.2px;color:#3d4a5c;">En</div>
<div class="t" style="left:1835.50px;top:1225.07px;font-size:13.5px;color:#3d4a5c;">Server Zone UTC +0</div>
<svg class="a" style="left:1968px;top:1224.5px" width="13" height="15" viewBox="0 0 13 15" fill="none" stroke="#222" stroke-width="1.2"><rect x="1" y="0.5" width="11" height="14" rx="2.5" stroke="#e4e4e4" stroke-width="1"/><path d="M4.2 5.4 L6.5 3.1 L8.8 5.4 M4.2 9.6 L6.5 11.9 L8.8 9.6"/></svg>
</body></html>
